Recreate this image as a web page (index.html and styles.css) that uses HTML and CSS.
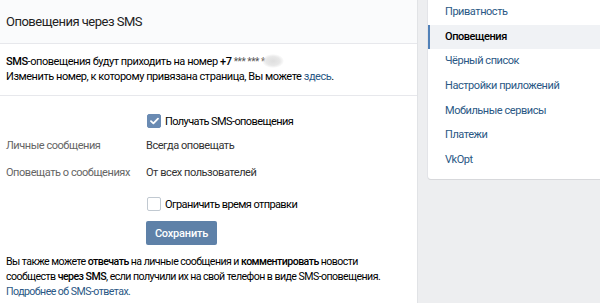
FILE: index.html
```html
<!DOCTYPE html>
<html lang="ru">
<head>
<meta charset="utf-8">
<link rel="stylesheet" href="styles.css">
</head>
<body>
<div class="page">
  <div class="main">
    <div class="head">Оповещения через SMS</div>
    <div class="info">
      <b>SMS</b>-оповещения будут приходить на номер <b>+7</b> <span class="mask">*** *** *</span><span class="blur"></span><br>
      Изменить номер, к которому привязана страница, Вы можете <a href="#" class="link">здесь</a>.
    </div>
    <div class="form">
      <div class="row r1">
        <div class="label"></div>
        <div class="field chk"><span class="cb checked"><svg width="9" height="8" viewBox="0 0 9 8"><path d="M1 4.2 L3.4 6.4 L8 1.6" fill="none" stroke="#fff" stroke-width="1.8" stroke-linecap="round" stroke-linejoin="round"/></svg></span>Получать SMS-оповещения</div>
      </div>
      <div class="row r2">
        <div class="label">Личные сообщения</div>
        <div class="field val">Всегда оповещать</div>
      </div>
      <div class="row r3">
        <div class="label">Оповещать о сообщениях</div>
        <div class="field val">От всех пользователей</div>
      </div>
      <div class="row r4">
        <div class="label"></div>
        <div class="field chk"><span class="cb"></span>Ограничить время отправки</div>
      </div>
      <div class="row r5">
        <div class="label"></div>
        <div class="field"><button class="btn">Сохранить</button></div>
      </div>
    </div>
    <div class="note">
      Вы также можете <b>отвечать</b> на личные сообщения и <b>комментировать</b> новости сообществ <b>через SMS</b>, если получили их на свой телефон в виде SMS-оповещения.<br>
      <a href="#" class="link">Подробнее об SMS-ответах.</a>
    </div>
  </div>
  <div class="side">
    <div class="menu">
      <a class="item" href="#">Приватность</a>
      <a class="item active" href="#">Оповещения</a>
      <a class="item" href="#">Чёрный список</a>
      <a class="item" href="#">Настройки приложений</a>
      <a class="item" href="#">Мобильные сервисы</a>
      <a class="item" href="#">Платежи</a>
      <a class="item" href="#">VkOpt</a>
    </div>
  </div>
</div>
</body>
</html>
```
FILE: styles.css
```css
html, body {
  margin: 0;
  padding: 0;
  background: #edeef0;
  font-family: Roboto, "Open Sans", "Liberation Sans", sans-serif;
  font-size: 11px;
  letter-spacing: -0.45px;
  color: #000;
  overflow: hidden;
}
.page {
  display: flex;
  gap: 10px;
  align-items: flex-start;
  height: 303px;
}
.main {
  width: 417px;
  flex: none;
  background: #fff;
  border-right: 1px solid #e1e3e6;
  min-height: 320px;
}
.head {
  height: 43px;
  line-height: 44px;
  background: #fafbfc;
  border-bottom: 1px solid #e7e8ec;
  padding-left: 6px;
  font-size: 13px;
  letter-spacing: -0.5px;
  color: #222;
}
.info {
  padding: 10px 20px 11px 6px;
  line-height: 15px;
  border-bottom: 1px solid #e7e8ec;
  color: #000;
}
.info b { font-weight: 500; }
.mask { color: #555; font-size: 10px; }
.blur {
  display: inline-block;
  width: 22px;
  height: 14px;
  margin-left: -3px;
  vertical-align: -3px;
  border-radius: 50%;
  background: radial-gradient(ellipse at center, #dedede 0%, #e8e8e8 45%, rgba(255,255,255,0) 72%);
}
.link { color: #2a5885; text-decoration: none; }
.form {
  padding: 15px 0 0 6px;
}
.row {
  display: flex;
  align-items: center;
  height: 20px;
}
.r2 { margin-top: 4px; }
.r3 { margin-top: 7px; }
.r4 { margin-top: 12px; }
.r5 { margin-top: 7px; height: 24px; }
.label {
  width: 140px;
  flex: none;
  color: #656565;
}
.field {
  display: flex;
  align-items: center;
  color: #000;
}
.chk { letter-spacing: -0.6px; }
.val { color: #333; }
.cb {
  width: 12px;
  height: 12px;
  border: 1px solid #c1c9d1;
  border-radius: 2px;
  margin-right: 4px;
  margin-left: 1px;
  display: inline-flex;
  align-items: center;
  justify-content: center;
  box-sizing: content-box;
  background: #fff;
}
.cb.checked {
  background: #6a8bb3;
  border-color: #6a8bb3;
}
.btn {
  font-family: inherit;
  font-size: 11px;
  letter-spacing: -0.2px;
  font-weight: 500;
  color: #fff;
  background: #5e81a8;
  border: 0;
  border-radius: 2px;
  height: 24px;
  width: 71px;
  padding: 0;
}
.note {
  padding: 9px 10px 20px 6px;
  line-height: 15px;
  color: #000;
  font-size: 10.6px;
  letter-spacing: -0.55px;
}
.note b { font-weight: 500; }
.side {
  flex: 1;
}
.menu {
  background: #fff;
  border-radius: 0 0 0 3px;
  box-shadow: 0 1px 0 0 #d7d8db, 0 0 0 1px #e3e4e8;
  padding-bottom: 6px;
}
.item {
  display: block;
  height: 24.67px;
  line-height: 24px;
  padding-left: 15px;
  color: #2a5885;
  text-decoration: none;
  border-left: 2px solid transparent;
}
.item.active {
  background: #f0f2f5;
  border-left-color: #5181b8;
  color: #000;
  font-weight: 500;
}
```
